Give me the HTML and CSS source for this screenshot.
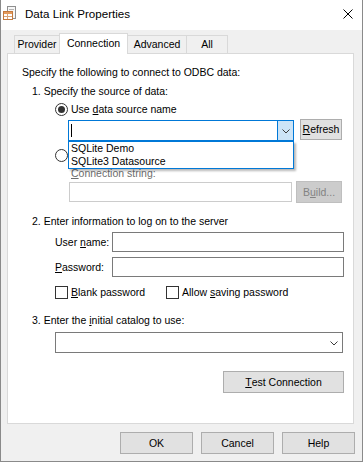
FILE: index.html
```html
<!DOCTYPE html>
<html>
<head>
<meta charset="utf-8">
<title>Data Link Properties</title>
<link rel="stylesheet" href="styles.css">
</head>
<body>
<div class="window">
  <div class="titlebar">
    <svg class="app-icon" width="13" height="15" viewBox="0 0 13 15">
      <rect x="4.5" y="0.5" width="8" height="12" fill="#f7f7f7" stroke="#8f8f8f"/>
      <line x1="6" y1="3.5" x2="11" y2="3.5" stroke="#b5b5b5"/>
      <rect x="0.5" y="5.5" width="9" height="8" fill="#fff" stroke="#c47a3e"/>
      <rect x="1" y="6" width="8" height="2" fill="#e49a5c"/>
      <line x1="1" y1="10.5" x2="9" y2="10.5" stroke="#d9a47a"/>
      <line x1="4.5" y1="8" x2="4.5" y2="13" stroke="#d9a47a"/>
    </svg>
    <span class="title">Data Link Properties</span>
    <svg class="close" width="10" height="10" viewBox="0 0 10 10">
      <path d="M0.5 0.5 L9.5 9.5 M9.5 0.5 L0.5 9.5" stroke="#000" stroke-width="1" fill="none"/>
    </svg>
  </div>

  <div class="tabs">
    <div class="tab t-provider">Provider</div>
    <div class="tab t-connection active">Connection</div>
    <div class="tab t-advanced">Advanced</div>
    <div class="tab t-all">All</div>
  </div>

  <div class="panel">
    <div class="row intro">Specify the following to connect to ODBC data:</div>
    <div class="row step s1">1. Specify the source of data:</div>
    <div class="row option o1"><span class="radio checked"></span><span>Use <u>d</u>ata source name</span></div>
    <div class="row dsn">
      <div class="combo dsn-combo">
        <span class="combo-text"><span class="caret"></span></span>
        <span class="drop-btn active-drop">
          <svg width="8" height="5" viewBox="0 0 8 5"><path d="M0.5 0.5 L4 4 L7.5 0.5" stroke="#3c3c3c" fill="none"/></svg>
        </span>
        <ul class="dropdown">
          <li>SQLite Demo</li>
          <li>SQLite3 Datasource</li>
        </ul>
      </div>
      <button type="button" class="btn refresh"><u>R</u>efresh</button>
    </div>
    <div class="row option o2"><span class="radio"></span></div>
    <div class="row conn-label"><u>C</u>onnection string:</div>
    <div class="row conn">
      <div class="textbox disabled-box"></div>
      <button type="button" class="btn build" disabled>B<u>u</u>ild...</button>
    </div>
    <div class="row step s2">2. Enter information to log on to the server</div>
    <div class="row field f-user"><span class="field-label">User <u>n</u>ame:</span><div class="textbox"></div></div>
    <div class="row field f-pass"><span class="field-label"><u>P</u>assword:</span><div class="textbox"></div></div>
    <div class="row checks">
      <span class="check-item first"><span class="checkbox"></span><span><u>B</u>lank password</span></span>
      <span class="check-item"><span class="checkbox"></span><span>Allow <u>s</u>aving password</span></span>
    </div>
    <div class="row step s3">3. Enter the <u>i</u>nitial catalog to use:</div>
    <div class="row catalog">
      <div class="combo catalog-combo">
        <span class="combo-text"></span>
        <span class="drop-btn">
          <svg width="8" height="5" viewBox="0 0 8 5"><path d="M0.5 0.5 L4 4 L7.5 0.5" stroke="#3c3c3c" fill="none"/></svg>
        </span>
      </div>
    </div>
    <div class="row test"><button type="button" class="btn test-btn"><u>T</u>est Connection</button></div>
  </div>

  <div class="footer">
    <button type="button" class="btn foot-btn">OK</button>
    <button type="button" class="btn foot-btn">Cancel</button>
    <button type="button" class="btn foot-btn">Help</button>
  </div>
</div>
</body>
</html>
```

FILE: styles.css
```css
* { box-sizing: border-box; }

html, body {
  margin: 0;
  padding: 0;
}

body {
  width: 363px;
  height: 462px;
  overflow: hidden;
  font-family: "Liberation Sans", Arial, sans-serif;
  font-size: 10.5px;
  line-height: 13px;
  color: #000;
  background: #f0f0f0;
}

u { text-decoration: underline; text-underline-offset: 1px; }

.window {
  width: 363px;
  height: 462px;
  border: 1px solid #8a8a8a;
  border-top: none;
  background: #f0f0f0;
  display: flex;
  flex-direction: column;
}

/* Title bar */
.titlebar {
  height: 30px;
  flex-shrink: 0;
  background: #fff;
  display: flex;
  align-items: center;
  padding-bottom: 3px;
}
.app-icon { margin-left: 2px; flex-shrink: 0; }
.title {
  margin-left: 9px;
  flex: 1;
  font-size: 11.6px;
  line-height: 16px;
}
.close { margin-right: 9px; flex-shrink: 0; }

/* Tabs */
.tabs {
  display: flex;
  align-items: flex-end;
  margin: 3px 0 0 13px;
  height: 21px;
  flex-shrink: 0;
}
.tab {
  height: 18px;
  margin-bottom: 1px;
  border: 1px solid #d9d9d9;
  border-bottom: none;
  background: #f0f0f0;
  display: flex;
  align-items: center;
  justify-content: center;
  white-space: nowrap;
}
.tab + .tab { margin-left: -1px; }
.t-provider { width: 46px; }
.t-connection { width: 69px; }
.t-advanced { width: 60px; }
.t-all { width: 42px; }
.tab.active {
  height: 21px;
  margin-bottom: 0;
  background: #fff;
  padding-bottom: 1px;
  position: relative;
  z-index: 1;
}

/* Panel */
.panel {
  margin: -1px 0 0 6px;
  width: 347px;
  height: 371px;
  flex-shrink: 0;
  border: 1px solid #d9d9d9;
  background: #fff;
  padding: 0 9px 0 0;
  display: flex;
  flex-direction: column;
}
.row { flex-shrink: 0; white-space: nowrap; }

.intro { margin-top: 12px; padding-left: 14px; height: 13px; }
.step { padding-left: 24px; height: 13px; }
.s1 { margin-top: 6px; }
.s2 { margin-top: 12px; }
.s3 { margin-top: 15px; }

.option {
  display: flex;
  align-items: center;
  height: 13px;
  padding-left: 47px;
}
.o1 { margin-top: 5px; }
.o2 { margin-top: 8px; }

.radio {
  width: 13px;
  height: 13px;
  border: 1px solid #333;
  border-radius: 50%;
  background: #fff;
  margin-right: 3px;
  flex-shrink: 0;
  display: flex;
  align-items: center;
  justify-content: center;
}
.radio.checked::after {
  content: "";
  width: 7px;
  height: 7px;
  border-radius: 50%;
  background: #333;
}

/* Combo boxes */
.dsn {
  margin-top: 3px;
  padding-left: 60px;
  height: 22px;
  display: flex;
  align-items: flex-start;
}
.combo {
  position: relative;
  height: 21px;
  background: #fff;
  border: 1px solid #7a7a7a;
  display: flex;
  align-items: stretch;
}
.combo-text { flex: 1; display: flex; align-items: center; }
.drop-btn {
  width: 16px;
  display: flex;
  align-items: center;
  justify-content: center;
  padding-top: 1px;
}
.dsn-combo {
  margin-top: 1px;
  width: 226px;
  border-color: #0078d7;
}
.active-drop {
  background: #cce4f7;
  border-left: 1px solid #0078d7;
}
.caret {
  display: block;
  width: 1px;
  height: 13px;
  margin-left: 2px;
  background: #000;
}
.dropdown {
  position: absolute;
  left: -1px;
  top: 20px;
  width: 226px;
  height: 28px;
  margin: 0;
  padding: 0;
  list-style: none;
  background: #fff;
  border: 1px solid #0078d7;
  box-shadow: 2px 2px 2px rgba(0, 0, 0, 0.28);
  z-index: 5;
}
.dropdown li {
  height: 13px;
  padding-left: 2px;
}

/* Buttons */
.btn {
  font: inherit;
  line-height: 13px;
  color: #000;
  height: 22px;
  padding: 0;
  margin: 0;
  background: #e1e1e1;
  border: 1px solid #adadad;
  border-radius: 0;
  display: flex;
  align-items: center;
  justify-content: center;
  white-space: nowrap;
}
.refresh { width: 42px; height: 21px; margin-left: 6px; }
.build {
  width: 46px;
  margin-left: 4px;
  background: #cccccc;
  border-color: #bfbfbf;
  color: #838383;
}

.conn-label {
  margin-top: 5px;
  padding-left: 63px;
  height: 13px;
  color: #6d6d6d;
}
.conn {
  margin-top: 1px;
  padding-left: 61px;
  height: 22px;
  display: flex;
  align-items: flex-start;
}

.textbox {
  height: 20px;
  background: #fff;
  border: 1px solid #7a7a7a;
}
.disabled-box {
  margin-top: 1px;
  width: 223px;
  border-color: #cccccc;
}

.field {
  display: flex;
  align-items: center;
  padding-left: 47px;
  height: 20px;
}
.field .textbox { flex: 1; }
.field-label { width: 57px; flex-shrink: 0; }
.f-user { margin-top: 4px; }
.f-pass { margin-top: 5px; }

.checks {
  margin-top: 9px;
  padding-left: 47px;
  height: 13px;
  display: flex;
}
.check-item { display: flex; align-items: center; }
.check-item.first { width: 111px; }
.checkbox {
  width: 13px;
  height: 13px;
  border: 1px solid #333;
  background: #fff;
  margin-right: 3px;
  flex-shrink: 0;
}

.catalog {
  margin-top: 5px;
  padding-left: 47px;
  height: 21px;
}
.catalog-combo { width: 288px; }
.catalog-combo .drop-btn { width: 17px; }

.test {
  margin-top: 18px;
  height: 22px;
  display: flex;
  justify-content: flex-end;
}
.test-btn { width: 121px; }

/* Footer */
.footer {
  margin-top: 8px;
  height: 22px;
  padding-right: 7px;
  display: flex;
  justify-content: flex-end;
  gap: 8px;
  flex-shrink: 0;
}
.foot-btn { width: 73px; }
```
